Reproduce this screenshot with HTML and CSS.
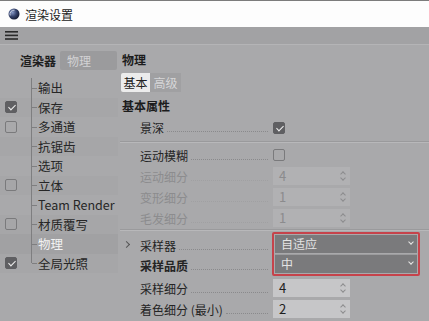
FILE: index.html
```html
<!DOCTYPE html>
<html lang="zh">
<head>
<meta charset="utf-8">
<title>渲染设置</title>
<link rel="stylesheet" href="styles.css">
</head>
<body>
<div class="window">
  <div class="titlebar">
    <svg class="appicon" width="12" height="12" viewBox="0 0 12 12">
      <defs>
        <radialGradient id="g" cx="0.35" cy="0.35" r="0.7">
          <stop offset="0" stop-color="#8a9cc8"/>
          <stop offset="0.55" stop-color="#34416a"/>
          <stop offset="1" stop-color="#141a30"/>
        </radialGradient>
      </defs>
      <circle cx="6" cy="6" r="5.5" fill="url(#g)"/>
      <path d="M2.2 7.5 A4 4 0 0 1 6.5 2.2" stroke="#dfe4f0" stroke-width="1" fill="none" opacity="0.8"/>
    </svg>
    <span class="title">渲染设置</span>
  </div>
  <div class="menubar">
    <svg width="13" height="9" viewBox="0 0 13 9" class="burger">
      <rect x="0" y="0" width="13" height="1.6" fill="#2a2a2a"/>
      <rect x="0" y="3.6" width="13" height="1.6" fill="#2a2a2a"/>
      <rect x="0" y="7.2" width="13" height="1.6" fill="#2a2a2a"/>
    </svg>
  </div>
  <div class="main">
    <div class="left">
      <div class="renderer">
        <span class="rlabel">渲染器</span>
        <span class="rsel">物理</span>
      </div>
      <ul class="tree">
        <li class="row"><span class="cbcell"></span><span class="node">输出</span></li>
        <li class="row alt"><span class="cbcell"><span class="cb on"></span></span><span class="node">保存</span></li>
        <li class="row"><span class="cbcell"><span class="cb"></span></span><span class="node">多通道</span></li>
        <li class="row alt"><span class="cbcell"></span><span class="node">抗锯齿</span></li>
        <li class="row"><span class="cbcell"></span><span class="node">选项</span></li>
        <li class="row alt"><span class="cbcell"><span class="cb"></span></span><span class="node">立体</span></li>
        <li class="row"><span class="cbcell"></span><span class="node">Team Render</span></li>
        <li class="row alt"><span class="cbcell"><span class="cb"></span></span><span class="node">材质覆写</span></li>
        <li class="row sel"><span class="cbcell"></span><span class="node">物理</span></li>
        <li class="row alt"><span class="cbcell"><span class="cb on"></span></span><span class="node last">全局光照</span></li>
      </ul>
    </div>
    <div class="right">
      <div class="heading h1">物理</div>
      <div class="tabs">
        <span class="tab active">基本</span><span class="tab">高级</span>
      </div>
      <div class="heading h2">基本属性</div>

      <div class="prop first">
        <div class="plabel"><span class="ptext">景深</span><span class="leader"></span></div>
        <span class="cb on"></span>
      </div>
      <div class="sep"></div>
      <div class="prop">
        <div class="plabel"><span class="ptext">运动模糊</span><span class="leader"></span></div>
        <span class="cb"></span>
      </div>
      <div class="prop dis">
        <div class="plabel"><span class="ptext">运动细分</span><span class="leader"></span></div>
        <span class="num">4<span class="spin"></span></span>
      </div>
      <div class="prop dis">
        <div class="plabel"><span class="ptext">变形细分</span><span class="leader"></span></div>
        <span class="num">1<span class="spin"></span></span>
      </div>
      <div class="prop dis">
        <div class="plabel"><span class="ptext">毛发细分</span><span class="leader"></span></div>
        <span class="num">1<span class="spin"></span></span>
      </div>
      <div class="sep s2"></div>
      <div class="group">
        <div class="glabels">
          <div class="plabel arrow"><span class="ptext">采样器</span><span class="leader"></span></div>
          <div class="plabel"><span class="ptext bold">采样品质</span><span class="leader"></span></div>
        </div>
        <div class="redbox">
          <div class="drop">自适应<span class="chev"></span></div>
          <div class="drop">中<span class="chev"></span></div>
        </div>
      </div>
      <div class="prop">
        <div class="plabel"><span class="ptext">采样细分</span><span class="leader"></span></div>
        <span class="num act">4<span class="spin"></span></span>
      </div>
      <div class="prop">
        <div class="plabel"><span class="ptext">着色细分 (最小)</span><span class="leader"></span></div>
        <span class="num act">2<span class="spin"></span></span>
      </div>
    </div>
  </div>
</div>
</body>
</html>
```

FILE: styles.css
```css
* { box-sizing: border-box; margin: 0; padding: 0; }
html, body { width: 429px; height: 321px; overflow: hidden; }
body {
  font-family: "Noto Sans CJK SC", "Noto Sans", sans-serif;
  font-size: 12px;
  color: #202020;
  background: #a9a9ab;
}
.window { width: 429px; height: 321px; display: flex; flex-direction: column; border-top: 1px solid #7c7c7c; }
.titlebar {
  height: 26px; background: #fdfdfd; display: flex; align-items: center;
  padding-left: 8px; gap: 5px; flex-shrink: 0;
}
.title { font-size: 12px; color: #1a1a1a; }
.menubar {
  height: 18px; background: #a2a2a4; display: flex; align-items: center;
  padding-left: 5px; border-bottom: 1px solid #b4b4b6; flex-shrink: 0;
}
.main { flex: 1; display: flex; }
.left { width: 118px; padding-top: 6px; flex-shrink: 0; }
.renderer { display: flex; align-items: center; height: 19px; }
.rlabel { width: 60px; padding-left: 20px; font-weight: bold; color: #1e1e1e; }
.rsel {
  width: 57px; height: 19px; background: #9b9b9d; color: #d2d2d4;
  padding-left: 7px; line-height: 19px; border-radius: 2px;
}
.tree { list-style: none; margin-top: 8px; }
.row { height: 19.5px; display: flex; align-items: center; background: #a9a9ab; }
.row.alt { background: #a6a6a8; }
.row.sel { background: #a1a1a3; }
.row.sel .node { color: #f2f2f2; }
.cbcell { width: 31px; height: 100%; display: flex; align-items: center; padding-left: 5px; }
.node {
  position: relative; height: 100%; display: flex; align-items: center;
  padding-left: 6px; color: #262626; font-size: 12.5px; border-left: 1px solid #7e7e80;
}
.node::before {
  content: ""; position: absolute; left: 0; top: 50%; width: 5px; border-top: 1px solid #7e7e80;
}
.node.last { border-left-color: transparent; }
.node.last::after {
  content: ""; position: absolute; left: -1px; top: 0; height: 50%; border-left: 1px solid #7e7e80;
}
.cb {
  width: 12px; height: 12px; border: 1px solid #7a7a7c; border-radius: 2px;
  display: inline-block; position: relative; flex-shrink: 0;
}
.cb.on { background: #5f5f62; border-color: #5f5f62; }
.cb.on::after {
  content: ""; position: absolute; left: 3.5px; top: 1px; width: 3px; height: 6px;
  border: solid #f0f0f0; border-width: 0 1.5px 1.5px 0; transform: rotate(45deg);
}
.right { flex: 1; padding-left: 4px; }
.heading { font-weight: bold; height: 18px; line-height: 18px; color: #1c1c1c; }
.h1 { margin-top: 6px; }
.tabs { display: flex; margin-top: 4px; margin-left: -1px; height: 19px; }
.tab {
  width: 31px; height: 19px; line-height: 19px; text-align: center;
  background: #a0a0a2; color: #d6d6d8;
}
.tab.active { width: 29px; background: #ececec; color: #202020; border-radius: 2px 0 0 2px; }
.h2 { margin-top: 5px; }
.prop { display: flex; align-items: center; height: 18px; margin-top: 3px; }
.prop.first { margin-top: 3px; height: 19px; }
.plabel { width: 151px; padding-left: 18px; display: flex; align-items: center; height: 18px; padding-right: 5px; position: relative; }
.ptext { white-space: nowrap; color: #242424; }
.ptext.bold { font-weight: bold; }
.leader { flex: 1; border-bottom: 1px dotted #8a8a8c; margin-left: 3px; margin-top: 8px; }
.dis .ptext { color: #8c8c8e; }
.dis .leader { border-bottom-color: #a0a0a2; }
.sep { height: 2px; border-top: 1px solid #9a9a9c; border-bottom: 1px solid #b8b8ba; margin: 4px 0 2px -2px; }
.sep.s2 { margin: 2px 0 1px -2px; }
.num {
  width: 77px; height: 18px; line-height: 18px; background: #b1b1b3; color: #8b8b8d;
  padding-left: 6px; position: relative; font-size: 13px;
}
.num.act { background: #c6c6c8; color: #1e1e1e; }
.spin { position: absolute; right: 4px; top: 4px; width: 6px; height: 10px; }
.spin::before, .spin::after {
  content: ""; position: absolute; left: 1px; width: 3px; height: 3px;
  border: solid #8c8c8e; border-width: 1px 0 0 1px;
}
.spin::before { top: 1px; transform: rotate(45deg); }
.spin::after { bottom: 1px; transform: rotate(225deg); }
.group { display: flex; }
.glabels { padding-top: 3px; }
.glabels .plabel { height: 20px; }
.arrow::before {
  content: ""; position: absolute; left: 2px; top: 7px; width: 4px; height: 4px;
  border: solid #555; border-width: 1px 1px 0 0; transform: rotate(45deg);
}
.redbox {
  width: 148px; border: 2px solid #c6434b; margin-left: -1px; padding: 1px 1px;
  border-radius: 2px;
}
.drop {
  height: 18px; line-height: 18px; background: #7a7a7c; color: #e4e4e4;
  padding-left: 6px; position: relative;
}
.drop + .drop { margin-top: 1px; border-top: 1px solid #9c9c9e; height: 19px; }
.chev {
  position: absolute; right: 4px; top: 5px; width: 4px; height: 4px;
  border: solid #e8e8e8; border-width: 0 1px 1px 0; transform: rotate(45deg);
}
```
